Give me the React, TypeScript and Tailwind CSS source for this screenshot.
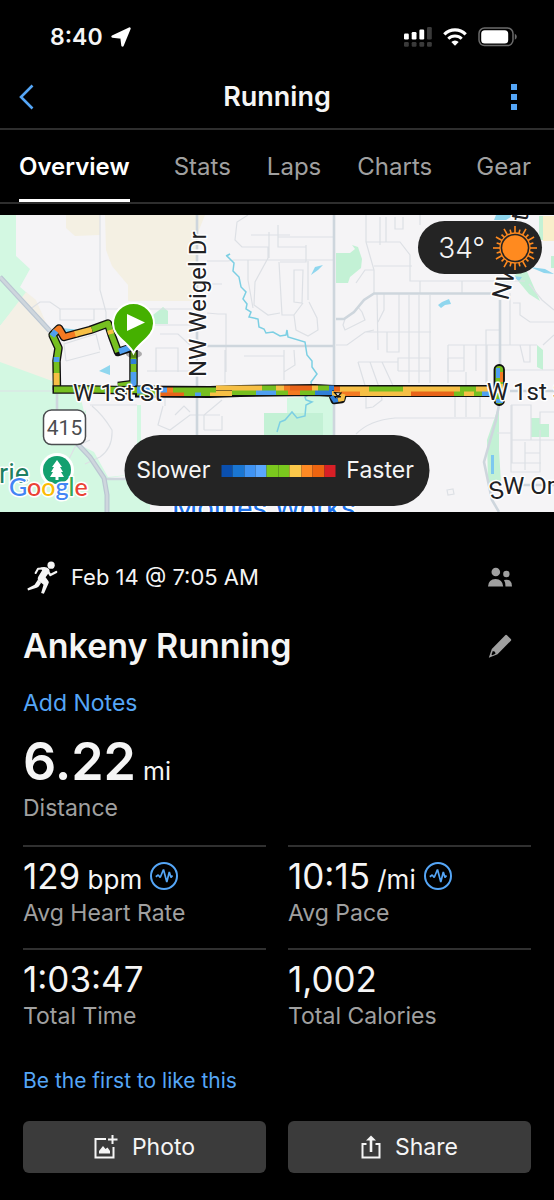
import React from "react";

const TABS = ["Overview", "Stats", "Laps", "Charts", "Gear"];

const PACE_COLORS = [
  "bg-[#0a4fae]",
  "bg-[#1a76d2]",
  "bg-[#3f93f3]",
  "bg-[#5aa7ff]",
  "bg-[#7ac81e]",
  "bg-[#7ac81e]",
  "bg-[#fbc84a]",
  "bg-[#ff8a24]",
  "bg-[#ed6410]",
  "bg-[#d81f26]",
];

const BLUE = "#4f9ff0";
const GREEN = "#76bf20";
const YELLOW = "#f6bf45";
const ORANGE = "#f47a22";
const RED = "#e8641a";
const DEEP = "#2f7fd8";

/* [x1, x2, colour] runs along W 1st St, upper and lower lane */
const UPPER: [number, number, string][] = [
  [160, 167, BLUE], [167, 173, ORANGE], [173, 216, GREEN], [216, 244, YELLOW], [244, 262, YELLOW],
  [262, 276, GREEN], [276, 284, YELLOW], [284, 290, ORANGE], [290, 312, RED], [312, 318, YELLOW],
  [318, 329, GREEN], [329, 334, DEEP], [334, 340, RED], [340, 348, YELLOW], [348, 369, YELLOW],
  [369, 403, GREEN], [403, 460, YELLOW], [460, 476, GREEN], [476, 490, YELLOW],
];
const LOWER: [number, number, string][] = [
  [160, 184, RED], [184, 195, GREEN], [195, 201, BLUE], [201, 210, GREEN], [210, 232, YELLOW],
  [232, 256, GREEN], [256, 276, BLUE], [276, 288, GREEN], [288, 300, ORANGE], [300, 315, GREEN],
  [315, 332, DEEP], [332, 341, YELLOW], [341, 360, ORANGE], [360, 411, YELLOW], [411, 454, RED],
  [454, 464, GREEN], [464, 474, YELLOW], [474, 482, GREEN], [482, 490, BLUE],
];

function StatusBar() {
  return (
    <div className="flex h-[66px] items-end justify-between pr-[37px] pb-[15px] pl-[50px]">
      <div className="flex items-center gap-2">
        <span className="text-[23px] leading-7 font-semibold">8:40</span>
        <svg width="20" height="20" viewBox="0 0 20 20">
          <path
            d="M18.500 1.500 11.500 18.500 10.500 10.500 1.500 9.500Z"
            fill="#fff"
            stroke="#fff"
            strokeWidth="2.400"
            strokeLinejoin="round"
          />
        </svg>
      </div>
      <div className="flex h-7 items-center gap-[11px]">
        <svg width="28" height="20" viewBox="0 0 28 20" fill="#fff">
          <rect x="0" y="6.500" width="4.800" height="6" rx="1.200" />
          <rect x="7.700" y="5" width="4.800" height="7.500" rx="1.200" />
          <rect x="15.400" y="2.500" width="4.800" height="10" rx="1.200" />
          <g fill="#3a3a3a">
            <rect x="23" y="0" width="4.800" height="12.500" rx="1.200" />
            <rect x="0" y="15" width="4.800" height="4.800" rx="1.200" />
            <rect x="7.700" y="15" width="4.800" height="4.800" rx="1.200" />
            <rect x="15.400" y="15" width="4.800" height="4.800" rx="1.200" />
            <rect x="23" y="15" width="4.800" height="4.800" rx="1.200" />
          </g>
        </svg>
        <svg width="24" height="18" viewBox="0 0 24 18" fill="none" stroke="#fff">
          <path d="M1.300 6.300a15.200 15.200 0 0 1 21.400 0" strokeWidth="3.200" />
          <path d="M5.300 10.700a9.500 9.500 0 0 1 13.400 0" strokeWidth="3" />
          <path d="M12 17.800 8.300 14a5.300 5.300 0 0 1 7.400 0Z" fill="#fff" stroke="none" />
        </svg>
        <svg width="39" height="20" viewBox="0 0 39 20">
          <rect x="1" y="1" width="34" height="17.600" rx="5.500" fill="none" stroke="#6b6b6b" strokeWidth="1.500" />
          <rect x="3.200" y="3.200" width="27" height="13.200" rx="3.500" fill="#fff" />
          <path d="M36.800 6.800q2 .8 2 3t-2 3Z" fill="#6b6b6b" />
        </svg>
      </div>
    </div>
  );
}

function RouteMap() {
  return (
    <svg className="block w-full" viewBox="0 215 554 297" role="img" aria-label="Route map" fontFamily="Roboto, sans-serif">
      <rect x="0" y="215" width="554" height="297" fill="#f5f4f6" />
      {/* parks */}
      <g fill="#d3f8e2">
        <path d="M0 215H16V256L30 269 20 287 27 293 0 326Z" />
        <path d="M0 358V512H150V478H108L137 474V405L92 405 84 412 80 394H62L55 382Z" />
        <path d="M137 405h4v72h-6Z" />
        <path d="M287 398l47-3v42h-47Z" />
      </g>
      <path d="M0 326 26 292 36 300 50 332 56 350 55 382 0 362Z" fill="#f4f0e6" />
      <path d="M66 215H100V235L75 236 66 228ZM105 215H205L197 235V301H128V285L112 266 106 250Z" fill="#f4f0e3" />
      <path d="M540 216h14v25h-11Z" fill="#f9eecb" />
      <g fill="#c3f1d5">
        <path d="M264 413H323V436H264Z" />
        <path d="M153 315 163 307 168 311V324H153ZM336 253H350L355 249 352 245 358 247 362 259 361 268 350 277 348 283H336Z" />
        <path d="M514 276 525 267 540 301 529 294ZM551 256h3v12h-3ZM539 216h4v24h-4ZM537 345l6 5v20l-6-3Z" />
        <path d="M499 405V450L501 483H488L487 440ZM531 418H540V424H549V437H531Z" />
      </g>
      <path d="M87 405H137V474L108 477 94 452 78 444 84 425Z" fill="#f5f4f6" />
      <g fill="#8fd6ee">
        <path d="M311 275 315 267 323 265 318 270ZM438 305 442 302 449 299 451 304 445 305 441 308ZM99 371l11-6v10ZM62 328l18 2-14 6ZM496 215h18l-8 5H494ZM512 276l10 1-3 4ZM530 267l15 2 9 5-10-1Z" />
        <path d="M491 455h3v19h-3Z" fill="#7ec8f0" />
      </g>
      {/* minor streets */}
      <g fill="none" stroke="#dde0e5" strokeWidth="1.200">
        <path d="M100 215V290L106 312V325M29 310 40 302H50L60 309H106M60 309V320H94V309M106 309H197M66 361 64 344 96 334 100 350M66 361 100 352M147 325H200M156 372V348H178V372M160 334H178L190 345M147 371H190M226 372V314H218L207 313M225 350V383M207 284H222" />
        <path d="M207 261H228L234 260H334M248 215 237 222 235 240 242 247H268V258L255 282 254 305 268 315 280 313M251 235H290M248 260V280L253 308M269 258V232M278 225V247H306V262L280 262M278 237H333M306 245V262M308 261V300M279 262 282 315H294M294 270V302L302 303 303 270ZM303 303 294 315 296 330 308 336 318 330 317 318 309 302" />
        <path d="M244 356H284V380M284 350V372L295 365 294 350M163 406 158 425 170 430 190 415H220M165 406V392M204 430V415L222 400M204 430H222L222 416M175 415 184 406 190 412" />
        <path d="M366 215V242L374 270V293M366 242H400L410 255V281H525M356 283 365 270H374M374 266H412M380 217V245M395 217V229H403V217M386 217V242M420 215V225M462 281V293M420 281V293M399 293V334M409 295V383M419 295V383M430 295V383M377 293 378 350M384 293V310L378 322M336 345H347L365 332H431M387 332V352H399V334M365 332 374 330M345 319 343 325 345 330 365 320 362 312 358 307" />
        <path d="M486 383V330H500M448 345V383M448 345H537M448 358H464M448 371H464V345M487 345V383M476 345V371M513 303H520V315L530 322H554M510 293V345M520 345 524 362H530L530 345M543 345 554 335M529 284 542 300 554 310" />
        <path d="M358 362H398V371M358 362 367 392M370 362 380 390M382 362 395 390M398 371V358H430V371H398M455 390V417M466 372V417M480 397V417M448 372V358M500 370H554M511 405H531V440H512V405M511 440H554M511 405V472H540V430M525 442V470M525 453H540M512 440V463H541M540 424V412H554M497 433H511M366 392V408L373 407 382 400 381 393" />
        <path d="M356 434Q370 420 395 418H498M0 391H55M90 405H137M90 440 75 447 66 465M92 406Q103 415 112 430 113 448 100 457L85 464M447 490l6-1 1 5-6 1Z" />
      </g>
      {/* major roads */}
      <g fill="none" stroke="#ced6dd" strokeWidth="2.600">
        <path d="M197 215V512M207 346H334M334 215V440M336 319H344L354 312 364 300 374 293.500H493M500 300V400L496 420 484 462 492 500 499 512M57 394V412M510 391H554M105 479H128M515 485H554" />
        <path d="M0 277 50 331M74 440 90 457 104 478 107 495V512" strokeWidth="5" stroke="#bac6d2" />
        <path d="M0 277 50 331M74 440 90 457 104 478 107 495V512" strokeWidth="2.600" />
      </g>
      {/* creek */}
      <path d="M226 256 230 254 227 256 234 263 233 271 239 277 241 287 246 292 243 299 247 304 246 309 251 312 249 317 258 319 259 327 264 329 266 333 273 332 280 336 286 335 287 330 288 337 305 342 307 355 312 361 312 367 317 374 311 382 313 392 305 397 306 400 312 402 306 405 305 416 297 418 292 412 285 420 280 422 277 432" fill="none" stroke="#7ccfe3" strokeWidth="1.500" />

      {/* west loop */}
      <g fill="none" strokeLinejoin="round">
        <path d="M133.500 350V384L118 386M57 390 56.500 361 58.500 348 52.500 335 59 328.500 64 337 90 330 108 323.500 112 336 118 352 130 348" stroke="#101010" strokeWidth="8.500" />
        <path d="M57 390 56.500 361 58.500 348 52.500 335 59 328.500" stroke={GREEN} strokeWidth="5.800" />
        <path d="M54 333 59 328.500 64 337 77 333.500" stroke={ORANGE} strokeWidth="5.800" />
        <path d="M52 336 56 331" stroke={BLUE} strokeWidth="5.800" />
        <path d="M56.500 357V362" stroke={BLUE} strokeWidth="5.800" />
        <path d="M56.500 373V386" stroke={YELLOW} strokeWidth="5.800" />
        <path d="M75 334 92 329.500" stroke={YELLOW} strokeWidth="5.800" />
        <path d="M92 329.500 108 323.500 112 336 118 352" stroke={GREEN} strokeWidth="5.800" />
        <path d="M110 330 111 334" stroke={YELLOW} strokeWidth="5.800" />
        <path d="M119 351.500 130 347.500" stroke={BLUE} strokeWidth="5.800" />
        <path d="M133.500 352V384L118 386" stroke={GREEN} strokeWidth="5.800" />
        <path d="M133.500 372V386" stroke={BLUE} strokeWidth="5.800" />
        <path d="M133.500 359V364" stroke={DEEP} strokeWidth="5.800" />
      </g>
      {/* W 1st St */}
      <g fill="none" strokeLinejoin="round">
        <path d="M52.500 389.500H90L140 390.500" stroke="#101010" strokeWidth="8.500" />
        <path d="M135 391.500 210 392 240 391 315 390 334 391 490 391" stroke="#101010" strokeWidth="12" />
        <path d="M54 389.500H90L160 390.500" stroke={GREEN} strokeWidth="5.800" />
        <path d="M137 391H160" stroke={GREEN} strokeWidth="9" />
        <path d="M137 390H150" stroke={BLUE} strokeWidth="7" />
        <path d="M332 396 334 401 342 400 343.500 395" stroke="#101010" strokeWidth="6.500" />
      </g>
      {LOWER.map(([a, b, c]) => (
        <rect key={"l" + a} x={a} y={a < 216 ? 391 : a < 330 ? 390 : 391} width={b - a} height="5" fill={c} />
      ))}
      {UPPER.map(([a, b, c]) => (
        <rect key={"u" + a} x={a} y={a < 216 ? 387.5 : a < 330 ? 385.5 : 386.5} width={b - a} height="5" fill={c} />
      ))}
      <path d="M331.500 396 334.500 400.500 338 400" fill="none" stroke={DEEP} strokeWidth="4" />
      <path d="M338 400 342.500 399 343.500 394" fill="none" stroke={YELLOW} strokeWidth="4" />
      <path d="M334.500 392.500 341 393 338 396.500Z" fill="#fff" stroke="#101010" strokeWidth="1.200" />
      {/* east turnaround */}
      <rect x="494.500" y="365" width="9.500" height="40" rx="4.500" fill={GREEN} stroke="#101010" strokeWidth="1.800" />
      <path d="M496 368h4v10h-4ZM496 399h7v4h-7Z" fill={BLUE} />
      <path d="M500 372h3v10h-3Z" fill={ORANGE} />
      <path d="M496 384h7v5h-7Z" fill={YELLOW} />

      {/* street names */}
      <g fill="#202124" stroke="#fff" strokeWidth="3" strokeLinejoin="round" paintOrder="stroke" fontSize="24">
        <text x="73" y="401">W 1st St</text>
        <text x="487" y="400">W</text>
        <text x="513" y="400">1st St</text>
        <text transform="translate(206 377) rotate(-90)">NW Weigel Dr</text>
        <text transform="translate(508 301) rotate(-76)">NW</text>
        <text transform="translate(527 222) rotate(-80)">to</text>
        <text transform="translate(491 500) rotate(-12)">S</text>
        <text x="503" y="494">W Or</text>
        <text x="-1" y="483" fill="#1d7f62" fontSize="27">rie</text>
        <text x="172" y="518" fill="#1a6fe8" fontSize="29">Moines Works</text>
      </g>
      <rect x="43.500" y="410" width="42" height="34.500" rx="8" fill="#fff" stroke="#4b4d50" strokeWidth="1.500" />
      <text x="64.500" y="435" textAnchor="middle" fontSize="21" fill="#4b4d50">415</text>

      <circle cx="57" cy="470" r="17" fill="#fff" />
      <circle cx="57" cy="470" r="14" fill="#13a06f" />
      <path d="M57 460 62 467H60L63 472H61L64 477H58.500V480H55.500V477H50L53 472H51L54 467H52Z" fill="#fff" />
      <text x="9" y="496" fontSize="25" fontFamily="Lato, sans-serif" fontWeight="500" stroke="#fff" strokeWidth="3" strokeLinejoin="round" paintOrder="stroke">
        <tspan fill="#4285f4">G</tspan>
        <tspan fill="#ea4335">o</tspan>
        <tspan fill="#fbbc05">o</tspan>
        <tspan fill="#4285f4">g</tspan>
        <tspan fill="#34a853">l</tspan>
        <tspan fill="#ea4335">e</tspan>
      </text>

      {/* start pin */}
      <ellipse cx="134" cy="354" rx="8" ry="4" fill="#000" opacity="0.300" />
      <path d="M133.500 353C129 343 113 337 113 323.500a20.500 20.500 0 0 1 41 0C154 337 138 343 133.500 353Z" fill="#45b000" stroke="#fff" strokeWidth="2" />
      <path d="M127 314V331L145 322.500Z" fill="#fff" />
    </svg>
  );
}

function SunIcon() {
  return (
    <svg width="44" height="44" viewBox="-22 -22 44 44" stroke="#ff8a1f" strokeWidth="1.600">
      <circle r="12.800" fill="#ff8a1f" stroke="none" />
      <circle r="15" fill="none" strokeWidth="1.300" />
      {Array.from({ length: 24 }, (_, i) => (
        <line key={i} x1="0" y1="-15" x2="0" y2={i % 2 ? -19 : -22} transform={`rotate(${i * 15})`} />
      ))}
    </svg>
  );
}

function PulseIcon() {
  return (
    <svg width="28" height="28" viewBox="0 0 28 28" fill="none" stroke="#55a6f7">
      <circle cx="14" cy="14" r="13" strokeWidth="2" />
      <path d="M5.800 14.700 8.200 13 10.200 15.500 13.500 7.500 16.800 20 19.300 10 21 15.500 22.500 13.500" strokeWidth="1.700" strokeLinejoin="bevel" />
    </svg>
  );
}

function Metric({ value, unit, label, pulse }: { value: string; unit?: string; label: string; pulse?: boolean }) {
  return (
    <div className="h-[103px] border-t-2 border-[#303030] pt-2">
      <div className="flex h-[42px] items-center">
        <p className="text-[35px] leading-10">
          {value}
          {unit && <span className="text-[26px] leading-none"> {unit}</span>}
        </p>
        {pulse && (
          <button aria-label={`${label} chart`} className="ml-2">
            <PulseIcon />
          </button>
        )}
      </div>
      <p className="text-[23px] leading-8 text-[#a0a0a0]">{label}</p>
    </div>
  );
}

function Tab({ name, active }: { name: string; active?: boolean }) {
  return (
    <a
      href={`#${name.toLowerCase()}`}
      className={
        active
          ? "flex items-center border-b-3 border-white pt-1 font-semibold text-white"
          : "flex items-center border-b-3 border-transparent pt-1 text-[#a0a0a0]"
      }
    >
      {name}
    </a>
  );
}

export default function App() {
  return (
    <div className="min-h-[1200px] bg-black font-['Inter','Liberation_Sans',sans-serif] text-[#f5f5f5]">
      <StatusBar />

      <header className="flex h-16 items-center justify-between border-b-2 border-[#2e2e2e] px-[19px]">
        <button aria-label="Back" className="w-6">
          <svg width="15" height="26" viewBox="0 0 15 26" fill="none" stroke="#55a6f7" strokeWidth="2.600">
            <path d="M13.500 1.500 2 13 13.500 24.500" />
          </svg>
        </button>
        <h1 className="text-[27px] leading-8 font-semibold">Running</h1>
        <button aria-label="More options" className="flex w-6 justify-end pr-[18px]">
          <svg className="shrink-0" width="6" height="26" viewBox="0 0 6 26" fill="#55a6f7">
            <path d="M0 0h6v6H0ZM0 10h6v6H0ZM0 20h6v6H0Z" />
          </svg>
        </button>
      </header>

      <nav className="flex h-[74px] justify-between border-b-2 border-[#2e2e2e] pr-[23px] pl-[19px] text-[24px]">
        <Tab name={TABS[0]} active />
        <div className="flex gap-9">
          {TABS.slice(1, 4).map((tab) => (
            <Tab key={tab} name={tab} />
          ))}
        </div>
        <Tab name={TABS[4]} />
      </nav>

      <div className="relative mt-[11px]">
        <RouteMap />
        <div className="absolute top-[6px] right-3 flex h-[53px] items-center gap-2 rounded-full bg-[#242424] pr-[5px] pl-5">
          <span className="text-[28px] leading-8 font-light">34°</span>
          <SunIcon />
        </div>
        <div className="absolute bottom-[6px] left-1/2 flex h-[71px] w-[305px] -translate-x-1/2 items-center justify-center gap-[11px] rounded-full bg-[#242424] pr-2 pl-1 text-[23px] whitespace-nowrap">
          <span>Slower</span>
          <div className="flex w-[114px]">
            {PACE_COLORS.map((c, i) => (
              <div key={i} className={`h-3 flex-1 ${c}`} />
            ))}
          </div>
          <span>Faster</span>
        </div>
      </div>

      <main className="px-[23px] pt-[45px]">
        <div className="flex h-10 items-center justify-between pr-[19px]">
          <div className="flex items-center gap-[13px] pl-1">
            <svg width="31" height="33" viewBox="51 33 90 96" fill="none" stroke="#f5f5f5" strokeLinejoin="round">
              <circle cx="121" cy="45" r="10.500" fill="#f5f5f5" stroke="none" />
              <path d="M76 68 83 55.500 99 55" strokeWidth="6" strokeLinecap="round" />
              <path d="M110 60 119 74 136 65" strokeWidth="6.500" strokeLinecap="round" />
              <path d="M90 52Q107 47 115 56 119 62 114 68L105 80 113 91Q116 94 113 99L100 128 92 126 99 102 87 92Q79 87 84 78L95 60Z" fill="#f5f5f5" stroke="none" />
              <path d="M83 87 92 96 86 106Q84 110 79 111L54 119 52 113 73 102Z" fill="#f5f5f5" stroke="none" />
            </svg>
            <span className="text-[22px] leading-8">Feb 14 @ 7:05 AM</span>
          </div>
          <svg width="24" height="20" viewBox="0 0 24 20" fill="#a0a0a0">
            <circle cx="7.800" cy="5" r="4.300" />
            <circle cx="18.400" cy="7" r="3.200" />
            <path d="M0 19.500Q.5 12 7.500 12T15.200 19.500ZM16 13q4-.8 6 .8 2 1.600 2 5.700H17.500Q17.500 15.500 16 13Z" />
          </svg>
        </div>

        <div className="mt-[25px] flex h-12 items-center justify-between pr-[19px]">
          <h2 className="text-[34px] leading-10 font-semibold">Ankeny Running</h2>
          <button aria-label="Edit title">
            <svg width="24" height="24" viewBox="0 0 24 24" fill="#a0a0a0">
              <path fillRule="evenodd" d="M17 1.500Q18 .3 19 1.300L22.800 5Q23.800 6 22.600 7L9.500 20.300.8 23.800 3.800 15ZM4.800 17 3.500 20.500 4.300 21.200 7.500 19.800 7 17.800Z" />
            </svg>
          </button>
        </div>

        <button className="mt-[17px] block text-[23px] leading-8 text-[#55a6f7]">Add Notes</button>

        <p className="mt-[13px] text-[52px] leading-15 font-semibold">
          6.22<span className="text-[25px] leading-none font-normal"> mi</span>
        </p>
        <p className="text-[23px] leading-8 text-[#a0a0a0]">Distance</p>

        <div className="mt-[21px] grid grid-cols-2 gap-x-[22px]">
          <Metric value="129" unit="bpm" label="Avg Heart Rate" pulse />
          <Metric value="10:15" unit="/mi" label="Avg Pace" pulse />
          <Metric value="1:03:47" label="Total Time" />
          <Metric value="1,002" label="Total Calories" />
        </div>

        <button className="mt-4 block text-[21px] leading-7 text-[#55a6f7]">Be the first to like this</button>

        <div className="mt-[26px] grid grid-cols-2 gap-x-[22px] text-[23px]">
          <button className="flex h-13 items-center justify-center gap-[14px] rounded-md bg-[#3b3b3b]">
            <svg width="24" height="24" viewBox="0 0 24 24" fill="none" stroke="#f5f5f5" strokeWidth="2">
              <path d="M12 4H1.500V22.500H19.500V12" />
              <path d="M18.500 0V9M14 4.500H23.500" />
              <path d="M5 18.500V16L9 11 11.500 14 13.500 12.500 16 16V18.500Z" fill="#f5f5f5" stroke="none" />
            </svg>
            Photo
          </button>
          <button className="flex h-13 items-center justify-center gap-[14px] rounded-md bg-[#3b3b3b]">
            <svg width="20" height="24" viewBox="0 0 20 24" fill="none" stroke="#f5f5f5" strokeWidth="2">
              <path d="M5.500 9H1.500V22.500H18.500V9H14.500" />
              <path d="M10 17V3" strokeWidth="2.600" />
              <path d="M5 5.500 10 .5 15 5.500Z" fill="#f5f5f5" stroke="none" />
            </svg>
            Share
          </button>
        </div>
      </main>
    </div>
  );
}
